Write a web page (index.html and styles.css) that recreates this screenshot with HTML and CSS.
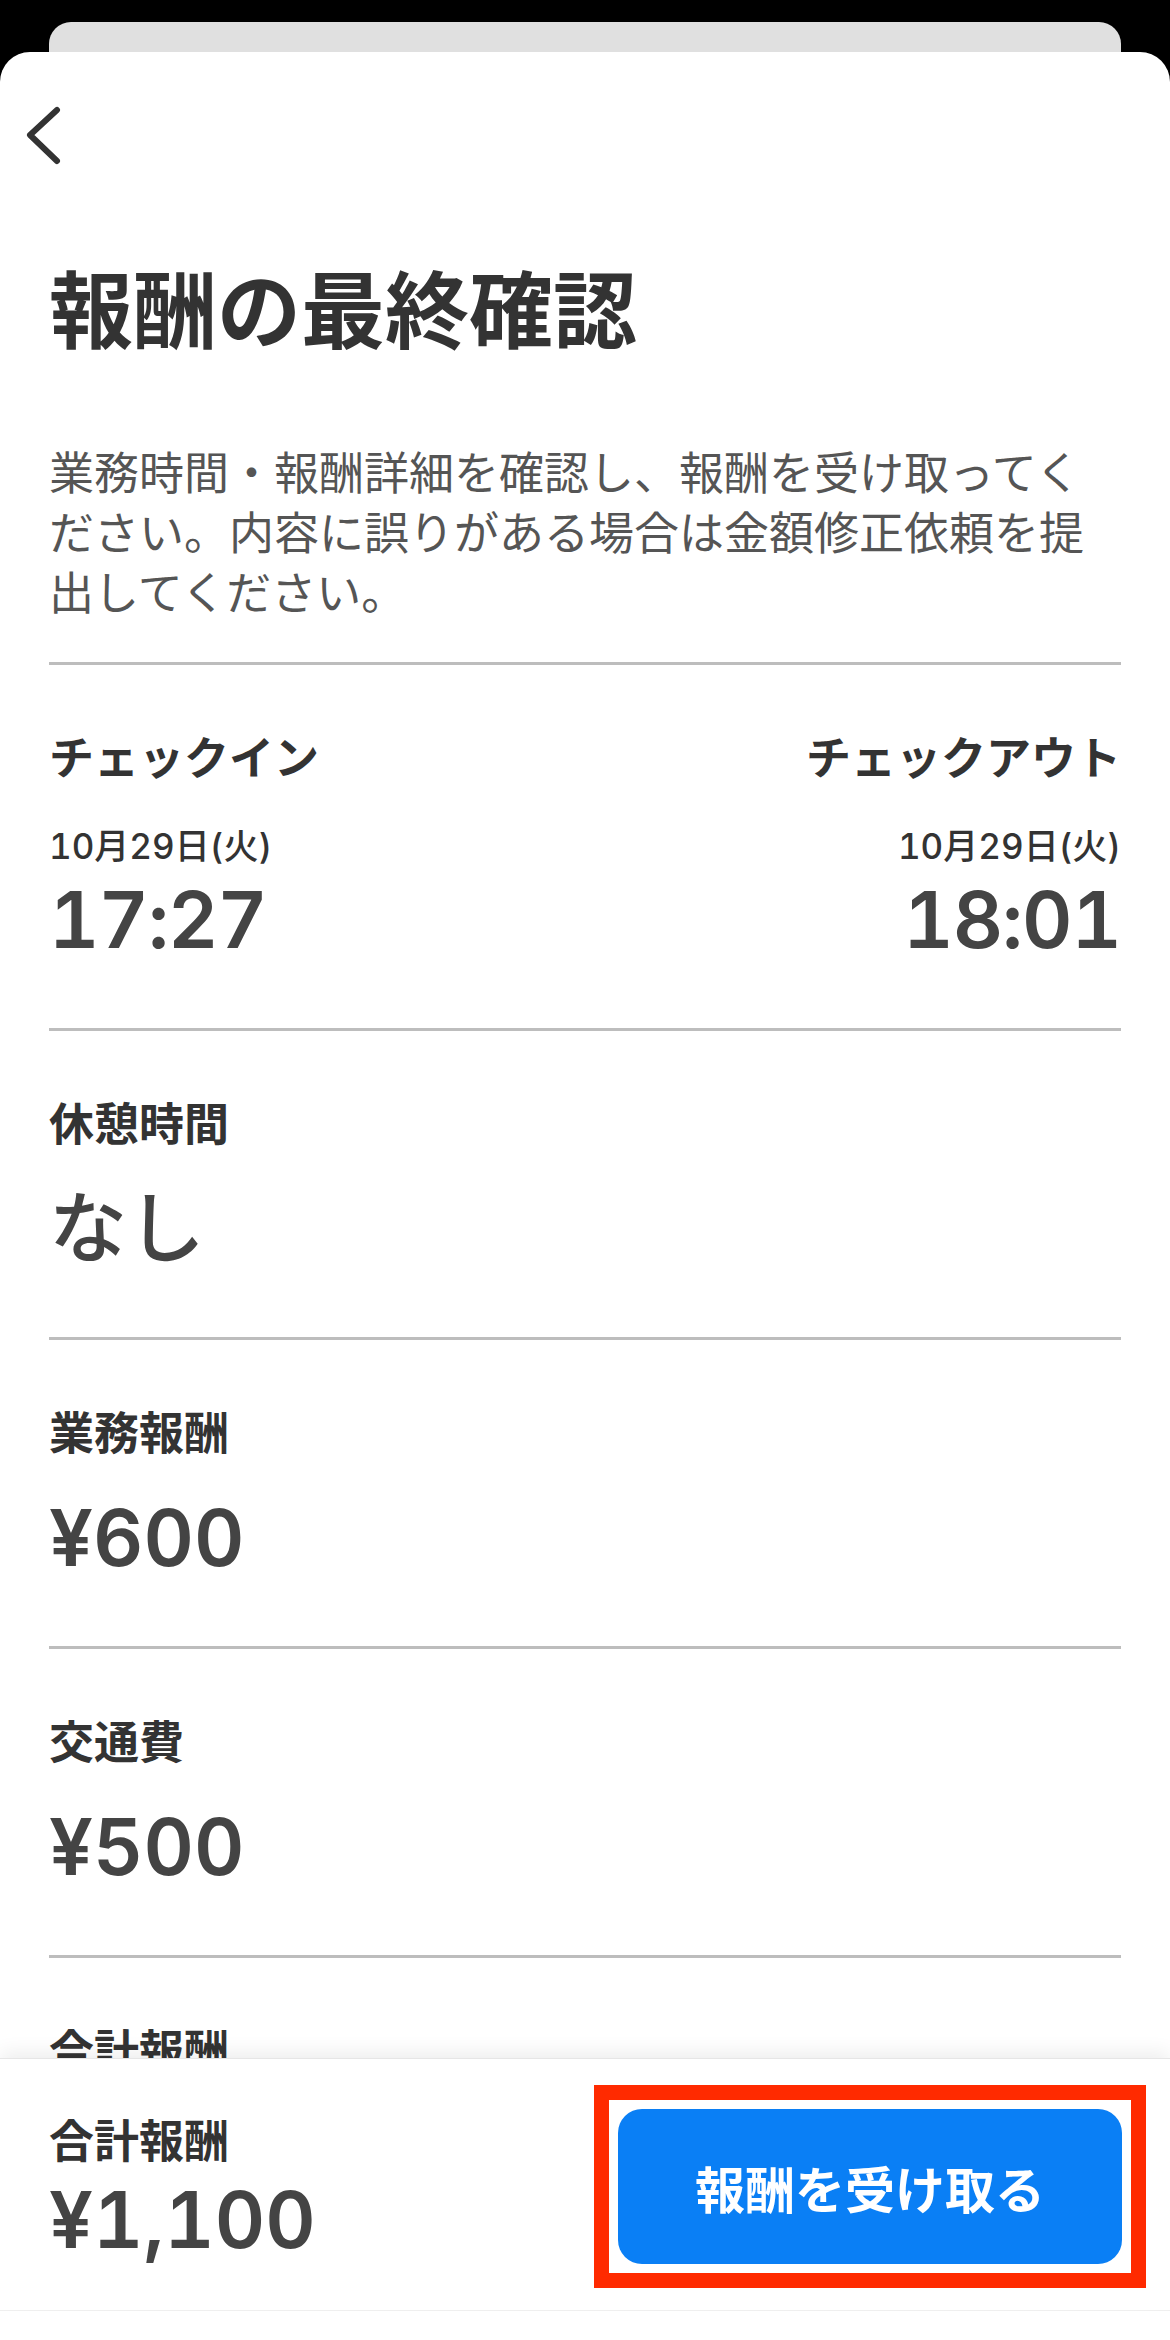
FILE: index.html
```html
<!DOCTYPE html>
<html lang="ja">
<head>
  <meta charset="UTF-8">
  <meta name="viewport" content="width=device-width, initial-scale=1.0">
  <title>報酬の最終確認</title>
  <link rel="stylesheet" href="styles.css">
</head>
<body>
  <div class="peek"></div>
  <main class="sheet">
    <div class="scroll">
      <nav class="nav">
        <button class="back" aria-label="戻る">
          <svg width="40" height="60" viewBox="0 0 40 60" fill="none">
            <path d="M33 5 L6 30 L33 56" stroke="#333" stroke-width="6" stroke-linecap="round" stroke-linejoin="round"/>
          </svg>
        </button>
      </nav>

      <h1 class="title">報酬の最終確認</h1>
      <p class="lead">業務時間・報酬詳細を確認し、報酬を受け取ってください。内容に誤りがある場合は金額修正依頼を提出してください。</p>

      <section class="row times">
        <div class="time-col">
          <div class="label">チェックイン</div>
          <div class="date">10月29日(火)</div>
          <div class="value time">17:27</div>
        </div>
        <div class="time-col end">
          <div class="label">チェックアウト</div>
          <div class="date">10月29日(火)</div>
          <div class="value time">18:01</div>
        </div>
      </section>

      <section class="row">
        <div class="label">休憩時間</div>
        <div class="value kana">なし</div>
      </section>

      <section class="row">
        <div class="label">業務報酬</div>
        <div class="value">¥600</div>
      </section>

      <section class="row">
        <div class="label">交通費</div>
        <div class="value">¥500</div>
      </section>

      <section class="row">
        <div class="label">合計報酬</div>
        <div class="value">¥1,100</div>
      </section>
    </div>

    <footer class="bar">
      <div class="total">
        <div class="label">合計報酬</div>
        <div class="value">¥1,100</div>
      </div>
      <div class="cta">
        <button class="receive">報酬を受け取る</button>
      </div>
    </footer>
  </main>
</body>
</html>
```

FILE: styles.css
```css
html, body {
  margin: 0;
  padding: 0;
}
body {
  background: #000;
  height: 2340px;
  padding-top: 22px;
  box-sizing: border-box;
  display: flex;
  flex-direction: column;
  overflow: hidden;
  font-family: "Noto Sans CJK JP", sans-serif;
  color: #333;
}
.peek {
  height: 30px;
  margin: 0 49px;
  background: #e0e0e0;
  border-radius: 22px 22px 0 0;
  flex-shrink: 0;
}
.sheet {
  flex: 1;
  min-height: 0;
  display: flex;
  flex-direction: column;
  background: #fff;
  border-radius: 30px 30px 0 0;
  overflow: hidden;
}
.scroll {
  flex: 1;
  min-height: 0;
  overflow: hidden;
  padding: 0 49px;
}
.nav {
  padding-top: 53px;
  height: 60px;
}
.back {
  display: block;
  margin-left: -25px;
  padding: 0;
  border: none;
  background: none;
  width: 40px;
  height: 60px;
}
.back svg {
  display: block;
}
.title {
  margin: 91px 0 0;
  font-size: 84px;
  line-height: 100px;
  font-weight: 700;
  color: #333;
}
.lead {
  margin: 85px 0 41px;
  font-size: 45px;
  line-height: 60px;
  color: #555;
}
.row {
  border-top: 3px solid #bdbdbd;
  padding: 59px 0 63px;
}
.label {
  font-size: 45px;
  line-height: 64px;
  font-weight: 700;
  color: #333;
}
.value {
  margin-top: 30px;
  font-family: Inter, "Noto Sans CJK JP", sans-serif;
  font-variant-numeric: tabular-nums;
  font-size: 78px;
  line-height: 90px;
  font-weight: 600;
  color: #444;
}
.value.kana {
  font-weight: 500;
}
.times {
  display: flex;
  justify-content: space-between;
}
.time-col.end {
  text-align: right;
}
.date {
  margin-top: 34px;
  font-family: Inter, "Noto Sans CJK JP", sans-serif;
  font-variant-numeric: tabular-nums;
  font-size: 35px;
  line-height: 48px;
  font-weight: 500;
  color: #333;
}
.value.time {
  margin-top: 5px;
  letter-spacing: -1px;
}

/* fixed bottom bar */
.bar {
  position: relative;
  flex-shrink: 0;
  height: 282px;
  box-sizing: border-box;
  padding: 50px 48px 0 49px;
  display: flex;
  justify-content: space-between;
  align-items: flex-start;
  background: linear-gradient(to bottom, #fff 251px, #efefef 251px, #efefef 252px, #fff 252px);
  border-top: 1px solid #e6e6e6;
  box-shadow: 0 -6px 18px rgba(0, 0, 0, 0.07);
}
.total .label {
  line-height: 60px;
}
.total .value {
  margin-top: 6px;
}
.cta {
  position: relative;
}
.receive {
  display: block;
  width: 504px;
  height: 155px;
  border: none;
  border-radius: 24px;
  background: #0a7ff5;
  color: #fff;
  font-family: "Noto Sans CJK JP", sans-serif;
  font-size: 50px;
  font-weight: 700;
}
/* red highlight frame around the button */
.cta::after {
  content: "";
  position: absolute;
  top: -24px;
  left: -24px;
  right: -24px;
  bottom: -24px;
  border: 15px solid #ff2a00;
  pointer-events: none;
}
```
